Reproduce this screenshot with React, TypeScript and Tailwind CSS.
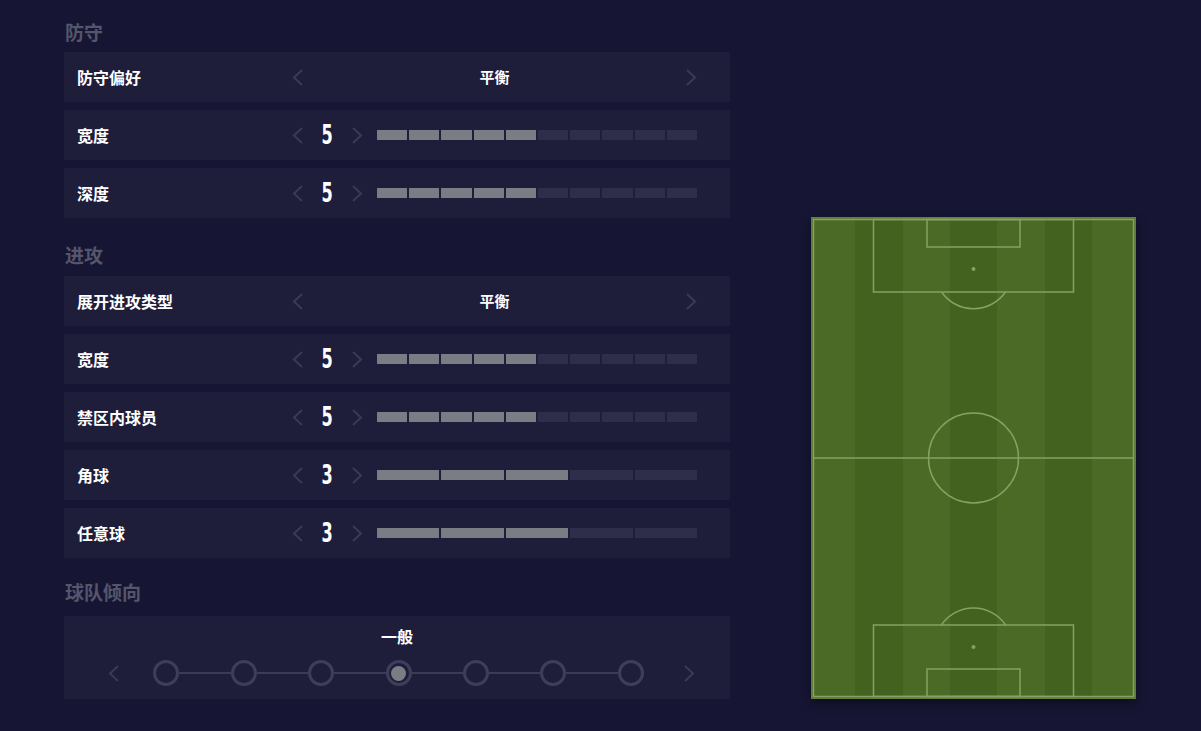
import React from 'react';

const FONT = { fontFamily: '"Noto Sans", "Noto Sans CJK SC", sans-serif' };
const NUM_FONT = { fontFamily: '"DejaVu Sans", "Liberation Sans", sans-serif' };

function Chevron({ dir }: { dir: 'left' | 'right' }) {
  return (
    <svg width="11" height="17" viewBox="0 0 11 17" className="shrink-0">
      <path
        d={dir === 'left' ? 'M10 1 L2 8.5 L10 16' : 'M1 1 L9 8.5 L1 16'}
        fill="none"
        stroke="#3a3a58"
        strokeWidth="2"
      />
    </svg>
  );
}

function Heading({ title, className }: { title: string; className: string }) {
  return (
    <div className={`h-[30px] pl-px text-[19px] font-bold leading-[30px] text-[#55556b] ${className}`}>
      {title}
    </div>
  );
}

function Row({ label, children }: { label: string; children: React.ReactNode }) {
  return (
    <div className="flex h-[50px] items-center bg-[#1e1e3b]">
      <div className="w-[228px] pl-[13px] pt-px text-[16px] font-bold text-white">{label}</div>
      {children}
    </div>
  );
}

function ChoiceRow({ label, value }: { label: string; value: string }) {
  return (
    <Row label={label}>
      <div className="flex w-[405px] items-center">
        <Chevron dir="left" />
        <div className="flex-1 pt-px text-center text-[15px] font-bold text-white">{value}</div>
        <Chevron dir="right" />
      </div>
    </Row>
  );
}

function SliderRow({ label, value, steps }: { label: string; value: number; steps: number }) {
  return (
    <Row label={label}>
      <Chevron dir="left" />
      <div className="flex w-[49px] justify-center">
        <span
          className="inline-block scale-x-[0.62] text-[26px] font-bold leading-none text-white"
          style={NUM_FONT}
        >
          {value}
        </span>
      </div>
      <Chevron dir="right" />
      <div className="ml-[14px] flex h-[10px] w-[320px] gap-[2px]">
        {Array.from({ length: steps }).map((_, i) => (
          <div key={i} className={`flex-1 ${i < value ? 'bg-[#7a7d84]' : 'bg-[#2e2e4b]'}`} />
        ))}
      </div>
    </Row>
  );
}

function Tendency() {
  const active = 3;
  return (
    <div className="flex h-[83px] flex-col items-center bg-[#1e1e3b] pt-[11px]">
      <div className="h-[20px] text-[16px] font-bold leading-[20px] text-white">一般</div>
      <div className="ml-[9px] mt-[13px] flex items-center">
        <Chevron dir="left" />
        <div className="ml-[34px] flex items-center">
          {Array.from({ length: 7 }).map((_, i) => (
            <React.Fragment key={i}>
              {i > 0 && <div className="h-[2px] w-[51.4px] bg-[#3b3b57]" />}
              <div className="flex size-[26px] items-center justify-center rounded-full border-[3px] border-[#3e3e5a]">
                {i === active && <div className="size-[15px] rounded-full bg-[#7a7d84]" />}
              </div>
            </React.Fragment>
          ))}
        </div>
        <div className="ml-[40px]">
          <Chevron dir="right" />
        </div>
      </div>
    </div>
  );
}

function Pitch() {
  const line = '#86a164';
  const stripes = [0, 44, 92, 139, 186, 234, 281, 325];
  return (
    <svg width="325" height="482" viewBox="0 0 325 482" className="shrink-0 shadow-[0_4px_10px_rgba(0,0,0,0.45)]">
      {stripes.slice(0, -1).map((x, i) => (
        <rect key={i} x={x} y={0} width={stripes[i + 1] - x} height={482} fill={i % 2 === 0 ? '#4b6a25' : '#43621f'} />
      ))}
      <rect x="0.75" y="0.75" width="323.5" height="480.5" fill="none" stroke="#5f7f3a" strokeWidth="1.5" />
      <g fill="none" stroke={line} strokeWidth="1.5">
        <rect x="2.5" y="2.5" width="320" height="477" />
        <line x1="2.5" y1="241" x2="322.5" y2="241" />
        <circle cx="162.5" cy="241" r="45" />
        <rect x="62.5" y="2.5" width="200" height="72.5" />
        <rect x="116" y="2.5" width="93" height="27.5" />
        <path d="M130.5 75 A39 39 0 0 0 194.5 75" />
        <rect x="62.5" y="408" width="200" height="71.5" />
        <rect x="116" y="452" width="93" height="27.5" />
        <path d="M130.3 408 A39 39 0 0 1 194.7 408" />
      </g>
      <circle cx="162.5" cy="52" r="2" fill={line} />
      <circle cx="162.5" cy="430" r="2" fill={line} />
    </svg>
  );
}

export default function App() {
  return (
    <div className="min-h-[731px] w-full bg-[#161634]" style={FONT}>
      <div className="flex items-end gap-[81px] pl-[64px] pt-[18px]">
        <div className="flex w-[666px] flex-col">
          <Heading title="防守" className="mb-[4px]" />
          <div className="flex flex-col gap-[8px]">
            <ChoiceRow label="防守偏好" value="平衡" />
            <SliderRow label="宽度" value={5} steps={10} />
            <SliderRow label="深度" value={5} steps={10} />
          </div>
          <Heading title="进攻" className="mb-[5px] mt-[23px]" />
          <div className="flex flex-col gap-[8px]">
            <ChoiceRow label="展开进攻类型" value="平衡" />
            <SliderRow label="宽度" value={5} steps={10} />
            <SliderRow label="禁区内球员" value={5} steps={10} />
            <SliderRow label="角球" value={3} steps={5} />
            <SliderRow label="任意球" value={3} steps={5} />
          </div>
          <Heading title="球队倾向" className="mb-[8px] mt-[20px]" />
          <Tendency />
        </div>
        <Pitch />
      </div>
    </div>
  );
}
